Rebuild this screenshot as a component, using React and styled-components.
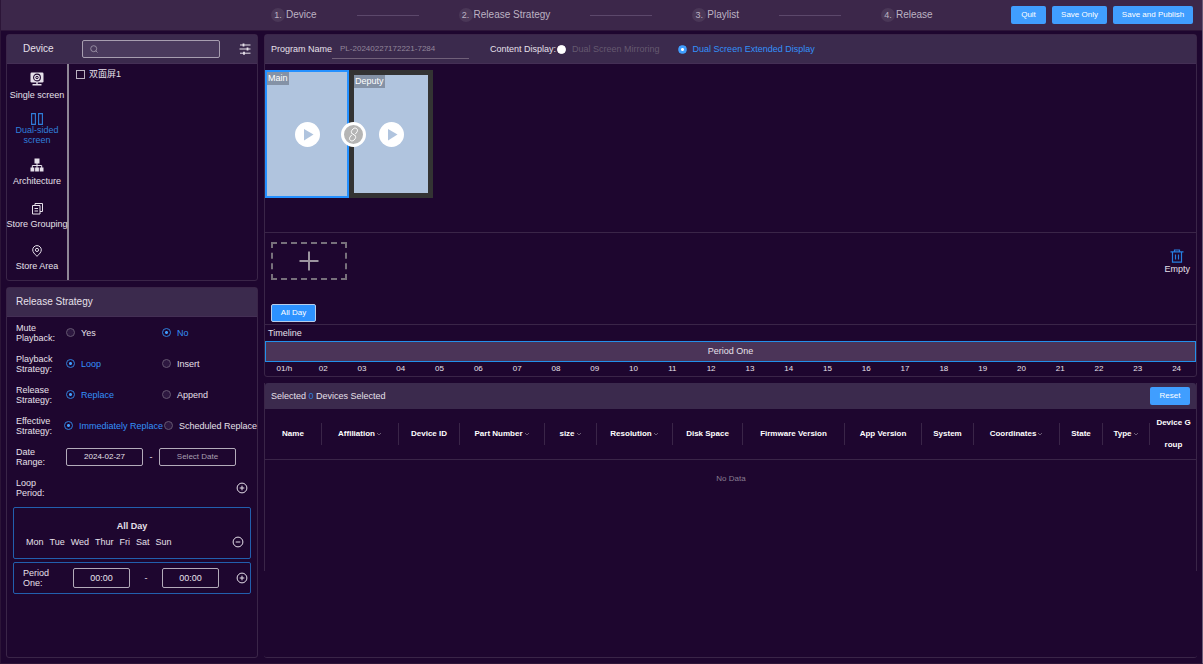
import React from "react";
import styled, { createGlobalStyle } from "styled-components";

const GlobalStyle = createGlobalStyle`
  * {
    box-sizing: border-box;
  }
  body {
    margin: 0;
    background: #1e062f;
    color: #e6e0ea;
    font: 9px/10px "Liberation Sans", "Noto Sans CJK SC", sans-serif;
  }
  button,
  input {
    margin: 0;
    padding: 0;
    border: 0;
    font: inherit;
    color: inherit;
    background: none;
  }
  button {
    cursor: pointer;
  }
`;

const Page = styled.div`
  display: flex;
  flex-direction: column;
  gap: 3px;
  min-height: 100vh;
  padding-bottom: 5px;
  border: solid;
  border-width: 0 1px 1px;
  border-color: #2c1538 #6b5c78 #2c1538 #2c1538;
`;
const TopBar = styled.header`
  display: flex;
  align-items: center;
  justify-content: space-between;
  height: 31px;
  padding: 0 9px 0 270px;
  background: #3c274a;
  border-bottom: 1px solid #2c1538;
`;
const Steps = styled.ol`
  display: flex;
  align-items: center;
  gap: 40px;
  margin: 0;
  padding: 0;
  list-style: none;
`;
const Step = styled.li`
  display: flex;
  align-items: center;
  gap: 1px;
  font-size: 10px;
  color: #bdb3c3;
  white-space: nowrap;
`;
const StepNumber = styled.span`
  width: 14px;
  height: 14px;
  border-radius: 50%;
  background: #4a3757;
  font-size: 9px;
  line-height: 14px;
  text-align: center;
`;
const StepLine = styled.li`
  width: 62px;
  height: 1px;
  background: #5c486b;
`;
const Actions = styled.div`
  display: flex;
  gap: 6px;
`;
const Button = styled.button`
  min-width: ${p => p.$width}px;
  height: 18px;
  border-radius: 2px;
  background: #409eff;
  color: #fff;
  font-size: 8px;
  white-space: nowrap;
`;

const Main = styled.main`
  flex: 1;
  display: flex;
  gap: 6px;
  padding: 0 5px;
`;
const Sidebar = styled.div`
  flex: none;
  display: flex;
  flex-direction: column;
  gap: 6px;
  width: 252px;
`;
const Workspace = styled.div`
  flex: 1;
  min-width: 0;
  display: flex;
  flex-direction: column;
  gap: 6px;
`;
const Panel = styled.section`
  flex: ${p => (p.$grow ? "1" : "none")};
  border: 1px solid #3a2548;
  border-radius: 3px;
`;
const PanelHeader = styled.div`
  display: flex;
  align-items: center;
  height: 29px;
  padding: 0 6px;
  background: #3b2a4d;
  border-bottom: 1px solid #442f55;
`;
const Title = styled.h2`
  margin: 0;
  padding: 0 ${p => p.$inset}px;
  font-size: 10px;
  font-weight: 400;
  line-height: 12px;
`;

/* device panel */
const SearchBox = styled.label`
  display: flex;
  align-items: center;
  width: 138px;
  height: 18px;
  margin: 0 auto 0 18px;
  padding: 0 7px;
  gap: 4px;
  border: 1px solid #a79eb0;
  border-radius: 2px;
  background: #4a3a5d;
  color: #a79eb0;
  input {
    flex: 1;
    min-width: 0;
    outline: none;
  }
`;
const DeviceBody = styled.div`
  display: flex;
  min-height: 216px;
`;
const Tabs = styled.nav`
  display: flex;
  flex-direction: column;
  width: 62px;
  border-right: 2px solid #8f8796;
`;
const Tab = styled.button`
  flex: 1;
  display: flex;
  flex-direction: column;
  align-items: center;
  justify-content: center;
  gap: ${p => (p.$tight ? 0 : 4)}px;
  color: ${p => (p.$active ? "#2f7fdb" : "#e6e0ea")};
  white-space: pre;
`;
const DeviceList = styled.div`
  flex: 1;
  padding: 4px 7px;
`;
const CheckLabel = styled.label`
  display: flex;
  align-items: center;
  gap: 4px;
  line-height: 12px;
  input {
    appearance: none;
    width: 9px;
    height: 9px;
    border: 1px solid #b9b1c0;
    &:checked {
      background: #409eff;
    }
  }
`;

/* release strategy */
const Form = styled.form`
  padding: 0 6px;
`;
const Field = styled.div`
  display: flex;
  align-items: center;
  height: 31px;
  padding: 0 3px;
`;
const FieldName = styled.span`
  flex: none;
  width: ${p => p.$width}px;
  white-space: pre;
`;
const Option = styled.label`
  flex: none;
  display: flex;
  align-items: center;
  gap: 6px;
  min-width: ${p => p.$width || 0}px;
  white-space: nowrap;
  &:has(input:checked) {
    color: #3391fa;
  }
  &:has(input:disabled) {
    color: #65596f;
  }
`;
const Radio = styled.input.attrs({ type: "radio" })`
  appearance: none;
  width: 9px;
  height: 9px;
  border: 1px solid #64566f;
  border-radius: 50%;
  background: #2d1740;
  &:checked {
    border-color: #2f7fdb;
    background: radial-gradient(#409eff 1px, transparent 2px);
  }
`;
const SolidRadio = styled(Radio)`
  border-color: #fff;
  background: #fff;
  &:checked {
    border-color: #409eff;
    background: radial-gradient(#fff 1px, #409eff 2px);
  }
`;
const TextBox = styled.input`
  width: ${p => p.$width}px;
  height: ${p => p.$height || 18}px;
  border: 1px solid #b3abba;
  border-radius: 2px;
  text-align: center;
  font-size: ${p => p.$size || 8}px;
  &::placeholder {
    color: #a89fb0;
    opacity: 1;
  }
`;
const Dash = styled.span`
  width: ${p => p.$width}px;
  text-align: center;
`;
const IconButton = styled.button`
  display: flex;
  margin-left: auto;
`;
const AllDayBox = styled.div`
  margin-top: 4px;
  padding: 12px 6px 10px 12px;
  border: 1px solid #225fae;
  border-radius: 2px;
  strong {
    display: block;
    padding-right: 6px;
    text-align: center;
    line-height: 12px;
  }
`;
const Days = styled.div`
  display: flex;
  align-items: center;
  gap: 6px;
  height: 12px;
  margin-top: 4px;
`;
const PeriodBox = styled.div`
  display: flex;
  align-items: center;
  height: 32px;
  margin-top: 3px;
  padding: 0 2px 0 9px;
  border: 1px solid #225fae;
  border-radius: 2px;
`;

/* program */
const Program = styled.label`
  display: flex;
  align-items: center;
  white-space: nowrap;
  input {
    width: 137px;
    height: 20px;
    padding-left: 8px;
    border-bottom: 1px solid #706079;
    font-size: 8px;
    color: #92869a;
  }
`;
const DisplayOptions = styled.div`
  display: flex;
  align-items: center;
  gap: 18px;
  margin-left: 21px;
  white-space: nowrap;
`;
const DisplayFirst = styled.div`
  display: flex;
  align-items: center;
  gap: 1px;
`;
const Stage = styled.div`
  height: 168px;
  padding-top: 6px;
`;
const Screens = styled.div`
  position: relative;
  display: flex;
  width: 168px;
`;
const Screen = styled.div`
  position: relative;
  display: flex;
  align-items: center;
  justify-content: center;
  width: 84px;
  height: 128px;
  border: ${p => (p.$active ? "2px solid #2490ff" : "5px solid #333")};
  background: #b0c4de;
`;
const ScreenTag = styled.span`
  position: absolute;
  top: 0;
  left: 0;
  padding: 1px;
  background: #8492a6;
  color: #fff;
  line-height: 11px;
`;
const Round = styled.button`
  display: flex;
  align-items: center;
  justify-content: center;
  width: 25px;
  height: 25px;
  border-radius: 50%;
  background: #fff;
`;
const LinkButton = styled(Round)`
  position: absolute;
  top: 50%;
  left: 50%;
  margin: -12px -8px;
  border: 3px solid #fff;
  background: #b5b5b5;
`;
const Playlist = styled.div`
  display: flex;
  flex-direction: column;
  align-items: flex-start;
  gap: 24px;
  padding: 9px 6px 2px;
  border-top: 1px solid #3a2548;
`;
const PlaylistRow = styled.div`
  display: flex;
  align-items: center;
  justify-content: space-between;
  width: 100%;
`;
const AddButton = styled.button`
  display: flex;
  align-items: center;
  justify-content: center;
  width: 76px;
  height: 38px;
  border: 2px dashed #77707b;
`;
const EmptyButton = styled.button`
  display: flex;
  flex-direction: column;
  align-items: center;
  gap: 1px;
`;
const DayButton = styled(Button)`
  border: 1px solid #b9cdea;
  background: #2d92ff;
`;
const TimelineTitle = styled.div`
  height: 17px;
  padding: 0 3px;
  border-top: 1px solid #3a2548;
  line-height: 17px;
`;
const PeriodBar = styled.div`
  height: 21px;
  border: 1px solid #2390ea;
  background: #4b3458;
  line-height: 19px;
  text-align: center;
`;
const Hours = styled.div`
  display: grid;
  grid-template-columns: repeat(24, 1fr);
  height: 14px;
  font-size: 8px;
  line-height: 14px;
  text-align: center;
`;

/* selected devices */
const DevicePanel = styled.section`
  flex: 1;
  display: flex;
  flex-direction: column;
  border-bottom: 1px solid #3a2548;
  border-radius: 3px;
`;
const DevicePanelBody = styled.div`
  min-height: 188px;
  border: solid #3a2548;
  border-width: 0 1px;
`;
const SelectedBar = styled.div`
  display: flex;
  align-items: center;
  justify-content: space-between;
  height: 26px;
  padding: 0 6px;
  border-radius: 3px 3px 0 0;
  background: #3b2a4d;
  em {
    font-style: normal;
    color: #2f7fdb;
  }
`;
const Table = styled.table`
  width: 100%;
  border-collapse: collapse;
  table-layout: fixed;
  font-size: 8px;
`;
const Th = styled.th`
  padding: 3px 0;
  border-bottom: 1px solid #3a2548;
  color: #fff;
`;
const ThInner = styled.div`
  display: flex;
  align-items: center;
  justify-content: center;
  gap: 1px;
  padding: 0 5px;
  border-right: ${p => (p.$last ? 0 : 1)}px solid #3a2548;
  line-height: 22px;
  word-break: ${p => (p.$last ? "break-all" : "normal")};
  white-space: ${p => (p.$last ? "normal" : "nowrap")};
`;
const EmptyCell = styled.td`
  height: 38px;
  padding: 0;
  color: #887d91;
  text-align: center;
`;

const stroke = { fill: "none", stroke: "currentColor" };

const CameraIcon = () => (
  <svg width="14" height="14" viewBox="0 0 14 14" aria-hidden="true">
    <rect x=".5" y=".5" width="13" height="10" rx="1.2" fill="currentColor" />
    <circle cx="7" cy="5.5" r="3.4" fill="none" stroke="#1e062f" strokeWidth="1.1" />
    <circle cx="7" cy="5.5" r="1.2" fill="none" stroke="#1e062f" />
    <path d="M7 10v2.5M2.5 12.8h9" {...stroke} strokeWidth="1.4" />
  </svg>
);
const DualIcon = () => (
  <svg width="12" height="12" viewBox="0 0 12 12" aria-hidden="true">
    <path d="M.6 .6h3.8v10.8H.6zM7.600 .6h3.800v10.800H7.600z" {...stroke} strokeWidth="1.1" />
  </svg>
);
const TreeIcon = () => (
  <svg width="14" height="14" viewBox="0 0 14 14" aria-hidden="true">
    <path d="M4.5 .5h5v5h-5zM.5 9.500h3.800v4H.5zM5.100 9.500h3.800v4H5.100zM9.700 9.500h3.800v4H9.700z" fill="currentColor" />
    <path d="M7 5v5M2.300 10V7.500h9.400V10" {...stroke} />
  </svg>
);
const GroupIcon = () => (
  <svg width="13" height="13" viewBox="0 0 13 13" aria-hidden="true">
    <path d="M1.500 3.500h7.500v8.500H1.500zM4 3.500V1.500h7.500v8H9M3.500 6.500h3.500M3.500 9h3.500" {...stroke} />
  </svg>
);
const PinIcon = () => (
  <svg width="12" height="12" viewBox="0 0 12 12" aria-hidden="true">
    <path d="M6 11.300C3.500 9 1.700 7 1.700 4.900a4.300 4.300 0 0 1 8.600 0C10.300 7 8.500 9 6 11.300z" {...stroke} />
    <circle cx="6" cy="4.900" r="1.600" {...stroke} />
  </svg>
);
const SearchIcon = () => (
  <svg width="8" height="8" viewBox="0 0 8 8" aria-hidden="true">
    <circle cx="3.700" cy="3.700" r="3" {...stroke} strokeWidth=".8" />
    <path d="M5.800 5.800l1.700 1.700" {...stroke} strokeWidth=".8" />
  </svg>
);
const SlidersIcon = () => (
  <svg width="12" height="12" viewBox="0 0 12 12" aria-hidden="true">
    <path d="M1 2h10.500M.5 6h11M1 10.200h10.500" {...stroke} />
    <path d="M4.500 .5v3M8.500 4.500v3M5 8.700v3" {...stroke} strokeWidth="1.800" />
  </svg>
);
const CircleIcon = ({ plus }) => (
  <svg width="12" height="12" viewBox="0 0 12 12" aria-hidden="true">
    <circle cx="6" cy="6" r="4.900" {...stroke} />
    <path d={plus ? "M3.700 6h4.600M6 3.700v4.600" : "M3.700 6h4.600"} {...stroke} />
  </svg>
);
const PlayIcon = () => (
  <svg width="25" height="25" viewBox="0 0 25 25" aria-hidden="true">
    <path d="M9 7l9.500 5.500L9 18.500z" fill="#b0c4de" />
  </svg>
);
const UnlinkIcon = () => (
  <svg width="15" height="15" viewBox="0 0 15 15" aria-hidden="true">
    <path
      d="M5.700 6.200C5 5 5.200 4.200 6 3.200l1-1.200c1-1.200 2.600-1.200 3.600-.4s1.200 2.400.3 3.500L9.500 6.800M9.300 8.800c.7 1.200.5 2-.3 3l-1 1.200c-1 1.200-2.600 1.200-3.600.4s-1.200-2.400-.3-3.500L5.500 8.200M5.700 6.200l3.600 2.600"
      fill="none"
      stroke="#fff"
      strokeLinecap="round"
    />
  </svg>
);
const PlusIcon = () => (
  <svg width="20" height="20" viewBox="0 0 20 20" aria-hidden="true">
    <path d="M10 .5v19M.5 10h19" fill="none" stroke="#9c949f" strokeWidth="2" />
  </svg>
);
const TrashIcon = () => (
  <svg width="14" height="14" viewBox="0 0 14 14" aria-hidden="true">
    <path
      d="M.5 2.800h13M4.500 2.500V1h5v1.500M2.500 3v10.200h9V3M5.500 5.500v5M8.500 5.500v5"
      fill="none"
      stroke="#267fe0"
      strokeWidth="1.200"
    />
  </svg>
);
const CaretIcon = () => (
  <svg width="6" height="6" viewBox="0 0 6 6" aria-hidden="true">
    <path d="M1 2l2 2 2-2" fill="none" stroke="#7d7187" strokeWidth=".8" />
  </svg>
);

const steps = ["Device", "Release Strategy", "Playlist", "Release"];

const tabs = [
  { label: "Single screen", Icon: CameraIcon },
  { label: "Dual-sided\nscreen", Icon: DualIcon, active: true },
  { label: "Architecture", Icon: TreeIcon },
  { label: "Store Grouping", Icon: GroupIcon },
  { label: "Store Area", Icon: PinIcon }
];

const strategies = [
  { name: "mute", label: "Mute\nPlayback:", options: ["Yes", "No"], checked: "No" },
  { name: "playback", label: "Playback\nStrategy:", options: ["Loop", "Insert"], checked: "Loop" },
  { name: "release", label: "Release\nStrategy:", options: ["Replace", "Append"], checked: "Replace" },
  {
    name: "effective",
    label: "Effective\nStrategy:",
    options: ["Immediately Replace", "Scheduled Replace"],
    checked: "Immediately Replace",
    wide: true
  }
];

const days = ["Mon", "Tue", "Wed", "Thur", "Fri", "Sat", "Sun"];

const hours = Array.from({ length: 24 }, (_, i) =>
  i === 0 ? "01/h" : String(i + 1).padStart(2, "0")
);

const columns = [
  { title: "Name", width: 57 },
  { title: "Affiliation", width: 77, filter: true },
  { title: "Device ID", width: 61 },
  { title: "Part Number", width: 85, filter: true },
  { title: "size", width: 52, filter: true },
  { title: "Resolution", width: 76, filter: true },
  { title: "Disk Space", width: 70 },
  { title: "Firmware Version", width: 102 },
  { title: "App Version", width: 77 },
  { title: "System", width: 52 },
  { title: "Coordinates", width: 86, filter: true },
  { title: "State", width: 43 },
  { title: "Type", width: 47, filter: true },
  { title: "Device Group", width: 47 }
];

const DeviceSelector = () => (
  <Panel>
    <PanelHeader>
      <Title $inset={10}>Device</Title>
      <SearchBox>
        <SearchIcon />
        <input type="text" aria-label="Search devices" />
      </SearchBox>
      <IconButton type="button" aria-label="Filter">
        <SlidersIcon />
      </IconButton>
    </PanelHeader>
    <DeviceBody>
      <Tabs>
        {tabs.map(({ label, Icon, active }) => (
          <Tab key={label} type="button" $active={active} $tight={label.includes("\n")}>
            <Icon />
            {label}
          </Tab>
        ))}
      </Tabs>
      <DeviceList>
        <CheckLabel>
          <input type="checkbox" />
          双面屏1
        </CheckLabel>
      </DeviceList>
    </DeviceBody>
  </Panel>
);

const ReleaseStrategy = () => (
  <Panel $grow>
    <PanelHeader>
      <Title $inset={3}>Release Strategy</Title>
    </PanelHeader>
    <Form>
      {strategies.map(({ name, label, options, checked, wide }) => (
        <Field key={name} role="radiogroup" aria-label={label}>
          <FieldName $width={wide ? 48 : 50}>{label}</FieldName>
          {options.map(option => (
            <Option key={option} $width={wide ? 100 : 96}>
              <Radio name={name} value={option} defaultChecked={option === checked} />
              {option}
            </Option>
          ))}
        </Field>
      ))}
      <Field>
        <FieldName $width={50}>{"Date\nRange:"}</FieldName>
        <TextBox type="text" aria-label="Start date" $width={77} defaultValue="2024-02-27" />
        <Dash $width={16}>-</Dash>
        <TextBox type="text" aria-label="End date" $width={77} placeholder="Select Date" />
      </Field>
      <Field>
        <FieldName $width={50}>{"Loop\nPeriod:"}</FieldName>
        <IconButton type="button" aria-label="Add loop period">
          <CircleIcon plus />
        </IconButton>
      </Field>
      <AllDayBox>
        <strong>All Day</strong>
        <Days>
          {days.map(day => (
            <span key={day}>{day}</span>
          ))}
          <IconButton type="button" aria-label="Remove loop period">
            <CircleIcon />
          </IconButton>
        </Days>
      </AllDayBox>
      <PeriodBox>
        <FieldName $width={50}>{"Period\nOne:"}</FieldName>
        <TextBox type="text" aria-label="Period start" $width={57} $height={20} $size={9} defaultValue="00:00" />
        <Dash $width={32}>-</Dash>
        <TextBox type="text" aria-label="Period end" $width={57} $height={20} $size={9} defaultValue="00:00" />
        <IconButton type="button" aria-label="Add period">
          <CircleIcon plus />
        </IconButton>
      </PeriodBox>
    </Form>
  </Panel>
);

const ProgramEditor = () => (
  <Panel>
    <PanelHeader>
      <Program>
        Program Name
        <input type="text" defaultValue="PL-20240227172221-7284" />
      </Program>
      <DisplayOptions role="radiogroup" aria-label="Content Display">
        <DisplayFirst>
          Content Display:
          <Option>
            <SolidRadio name="display" value="mirror" disabled />
            Dual Screen Mirroring
          </Option>
        </DisplayFirst>
        <Option>
          <SolidRadio name="display" value="extended" defaultChecked />
          Dual Screen Extended Display
        </Option>
      </DisplayOptions>
    </PanelHeader>
    <Stage>
      <Screens>
        <Screen $active>
          <ScreenTag>Main</ScreenTag>
          <Round type="button" aria-label="Play main">
            <PlayIcon />
          </Round>
        </Screen>
        <Screen>
          <ScreenTag>Deputy</ScreenTag>
          <Round type="button" aria-label="Play deputy">
            <PlayIcon />
          </Round>
        </Screen>
        <LinkButton type="button" aria-label="Unlink screens">
          <UnlinkIcon />
        </LinkButton>
      </Screens>
    </Stage>
    <Playlist>
      <PlaylistRow>
        <AddButton type="button" aria-label="Add program">
          <PlusIcon />
        </AddButton>
        <EmptyButton type="button">
          <TrashIcon />
          Empty
        </EmptyButton>
      </PlaylistRow>
      <DayButton type="button" $width={45}>
        All Day
      </DayButton>
    </Playlist>
    <TimelineTitle>Timeline</TimelineTitle>
    <PeriodBar>Period One</PeriodBar>
    <Hours>
      {hours.map(hour => (
        <span key={hour}>{hour}</span>
      ))}
    </Hours>
  </Panel>
);

const SelectedDevices = () => (
  <DevicePanel>
    <DevicePanelBody>
      <SelectedBar>
        <span>
          Selected <em>0</em> Devices Selected
        </span>
        <Button type="button" $width={40}>
          Reset
        </Button>
      </SelectedBar>
      <Table>
        <colgroup>
          {columns.map(({ title, width }) => (
            <col key={title} width={width} />
          ))}
        </colgroup>
        <thead>
          <tr>
            {columns.map(({ title, filter }, i) => (
              <Th key={title} scope="col">
                <ThInner $last={i === columns.length - 1}>
                  {title}
                  {filter && <CaretIcon />}
                </ThInner>
              </Th>
            ))}
          </tr>
        </thead>
        <tbody>
          <tr>
            <EmptyCell colSpan={columns.length}>No Data</EmptyCell>
          </tr>
        </tbody>
      </Table>
    </DevicePanelBody>
  </DevicePanel>
);

const App = () => (
  <>
    <GlobalStyle />
    <Page>
      <TopBar>
        <Steps>
          {steps.map((step, i) => (
            <React.Fragment key={step}>
              {i > 0 && <StepLine aria-hidden="true" />}
              <Step>
                <StepNumber>{i + 1}.</StepNumber>
                {step}
              </Step>
            </React.Fragment>
          ))}
        </Steps>
        <Actions>
          <Button type="button" $width={35}>
            Quit
          </Button>
          <Button type="button" $width={55}>
            Save Only
          </Button>
          <Button type="button" $width={80}>
            Save and Publish
          </Button>
        </Actions>
      </TopBar>
      <Main>
        <Sidebar>
          <DeviceSelector />
          <ReleaseStrategy />
        </Sidebar>
        <Workspace>
          <ProgramEditor />
          <SelectedDevices />
        </Workspace>
      </Main>
    </Page>
  </>
);

export default App;
